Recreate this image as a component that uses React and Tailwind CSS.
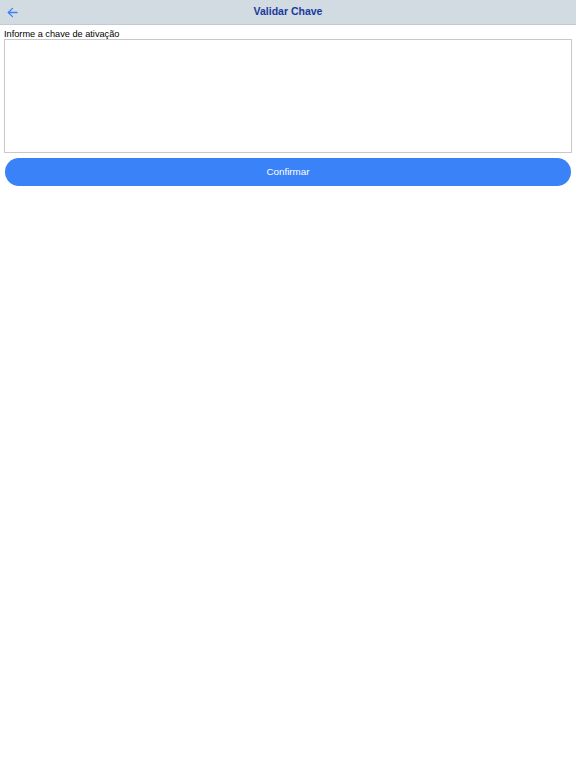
import React from "react";

export default function App() {
  return (
    <div className="w-[576px] h-[768px] bg-white flex flex-col" style={{ fontFamily: '"Liberation Sans", Arial, sans-serif' }}>
      <div className="h-[25px] bg-[#d2dae2] border-b border-[#c4cad1] flex items-center relative">
        <svg className="absolute left-[7px] top-[7px]" width="11" height="11" viewBox="0 0 12 12" fill="none" stroke="#3b82f6" strokeWidth="1.4" strokeLinecap="round" strokeLinejoin="round">
          <path d="M11 6H1.5" />
          <path d="M6 1.5L1.5 6L6 10.5" />
        </svg>
        <div className="flex-1 text-center font-bold text-[10.5px] text-[#1a3a9e]">Validar Chave</div>
      </div>
      <div className="px-[4px] pt-[4px] text-[9.2px] leading-[10px] text-black">Informe a chave de ativação</div>
      <div className="px-[4px]">
        <textarea className="block w-full h-[114px] border border-[#c9c9c9] resize-none outline-none bg-white" />
      </div>
      <div className="px-[5px] pt-[5px]">
        <button className="w-full h-[28px] rounded-full bg-[#3a82f7] text-white text-[9.8px] flex items-center justify-center">Confirmar</button>
      </div>
    </div>
  );
}
